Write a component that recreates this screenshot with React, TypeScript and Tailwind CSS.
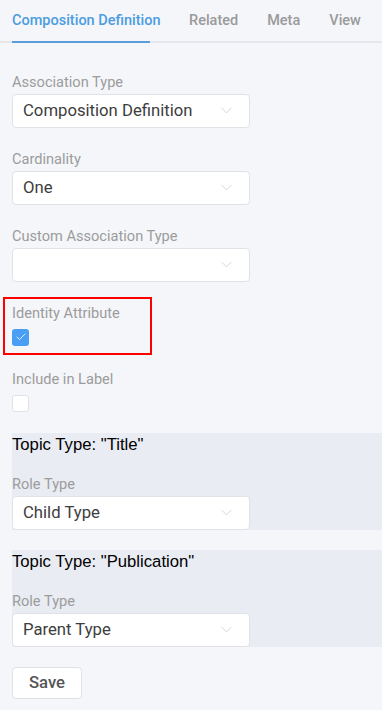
import { ChevronDown, Check } from "lucide-react";

const Select = ({ value }: { value: string }) => (
  <div className="flex h-[34px] w-[238px] items-center justify-between rounded border border-[#dfe2e7] bg-white pl-[10px] pr-[13px]">
    <span className="text-[16.7px] text-[#3d3d3d]">{value}</span>
    <ChevronDown className="h-[19px] w-[19px] text-[#c9ccd2]" strokeWidth={1} />
  </div>
);

const Field = ({ label, value }: { label: string; value: string }) => (
  <div className="mb-[21px]">
    <div className="mb-[2px] h-5 text-[14.6px] leading-5 text-[#9c9c9c]">{label}</div>
    <Select value={value} />
  </div>
);

const CheckField = ({ label, checked }: { label: string; checked: boolean }) => (
  <div className="flex flex-col">
    <div className="mb-[6px] h-5 text-[14.6px] leading-5 text-[#9c9c9c]">{label}</div>
    {checked ? (
      <div className="flex h-[17px] w-[17px] items-center justify-center rounded-[3px] bg-[#4a9ff5]">
        <Check className="h-3 w-3 text-white" strokeWidth={1.6} />
      </div>
    ) : (
      <div className="h-[17px] w-[17px] rounded-[3px] border border-[#dfe2e7] bg-white" />
    )}
  </div>
);

const TopicSection = ({ title, role }: { title: string; role: string }) => (
  <div className="bg-[#e9ecf3]">
    <div className="h-6 text-[16.7px] leading-6 text-black" style={{ fontFamily: '"Liberation Sans", Arial, sans-serif' }}>
      {title}
    </div>
    <div className="mt-[17px] mb-[2px] h-5 text-[14.6px] leading-5 text-[#9c9c9c]">Role Type</div>
    <Select value={role} />
  </div>
);

export default function App() {
  return (
    <div className="min-h-[710px] w-[382px] overflow-hidden bg-[#f4f6fa] font-['Roboto',sans-serif]">
      {/* tabs */}
      <div className="flex border-b-2 border-[#e4e7ec] pl-3 pt-[10px] text-[14.5px] font-medium">
        <div className="relative w-[138px] whitespace-nowrap pb-[9px] text-[#4b9de0]">
          Composition Definition
          <div className="absolute -bottom-[2px] left-0 h-[2px] w-[138px] bg-[#5b9dd8]" />
        </div>
        <div className="ml-[39px] text-[#9a9a9a]">Related</div>
        <div className="ml-[29px] text-[#9a9a9a]">Meta</div>
        <div className="ml-[29px] text-[#9a9a9a]">View</div>
      </div>

      <div className="pl-3 pt-[29px]">
        <Field label="Association Type" value="Composition Definition" />
        <Field label="Cardinality" value="One" />
        <Field label="Custom Association Type" value="" />

        <div className="relative">
          <div className="pointer-events-none absolute -left-[9px] -top-[6px] h-[58px] w-[149px] border-2 border-[#ff0000]" />
          <CheckField label="Identity Attribute" checked />
        </div>
        <div className="mt-[23px]">
          <CheckField label="Include in Label" checked={false} />
        </div>

        <div className="mt-[21px]">
          <TopicSection title={'Topic Type: "Title"'} role="Child Type" />
        </div>
        <div className="mt-[20px]">
          <TopicSection title={'Topic Type: "Publication"'} role="Parent Type" />
        </div>

        <button className="mt-[20px] h-[32px] w-[70px] rounded border border-[#dfe2e7] bg-white text-[16.7px] font-medium text-[#555]">
          Save
        </button>
      </div>
    </div>
  );
}
